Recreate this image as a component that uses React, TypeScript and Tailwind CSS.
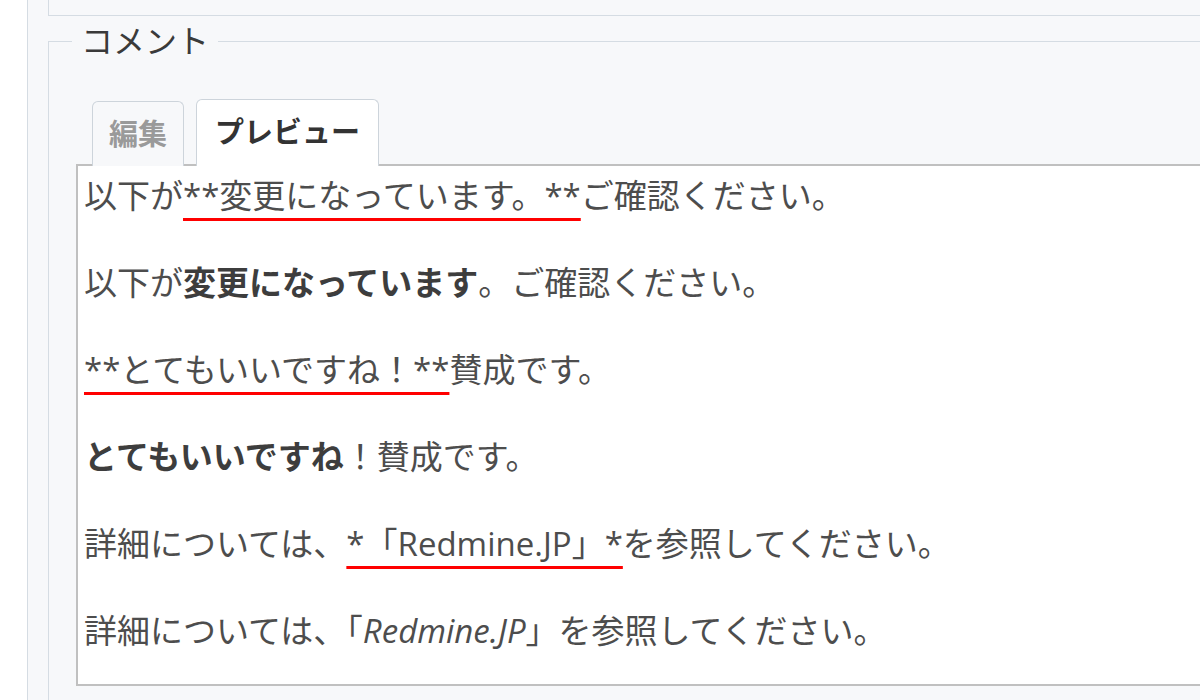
const font = { fontFamily: '"Open Sans", "Noto Sans CJK JP", sans-serif' };

const mark =
  "underline decoration-[#ff0000] decoration-[3px] underline-offset-[10px] [text-decoration-skip-ink:none]";

const CommentPreview = () => {
  return (
    <div className="h-[700px] w-full overflow-hidden bg-white flex" style={font}>
      <div className="w-[27px] shrink-0 bg-white" />
      <div className="w-[1300px] shrink-0 border-l border-[#d5dce3] bg-[#f7f8fa] pl-[20px]">
        <div className="h-[16px] border-l border-b border-[#d5dce3]" />
        <fieldset className="mt-[5px] h-[800px] border border-[#d5dce3] pl-[27px] pr-0">
          <legend className="ml-[-4px] px-[9px] text-[32px] leading-[40px] text-[#3a3a3a]">
            コメント
          </legend>
          <div className="mt-[38px] flex items-end pl-[16px] gap-[12px] relative z-10 mb-[-2px]">
            <div className="h-[65px] px-[16px] flex items-center rounded-t-[6px] border border-b-0 border-[#cdd4db] bg-[#f7f8fa] text-[29px] font-bold text-[#9a9a9a]">
              編集
            </div>
            <div className="h-[67px] px-[18px] pb-[2px] flex items-center rounded-t-[6px] border border-b-0 border-[#cdd4db] bg-white text-[29px] font-bold text-[#333]">
              プレビュー
            </div>
          </div>
          <div className="border-2 border-[#c0c0c0] bg-white pl-[6px] pt-[6px] pb-[29px] text-[33px] leading-[48px] text-[#4d4d4d]">
            <p className="mb-[39px]">
              以下が<span className={mark}>**変更になっています。**</span>ご確認ください。
            </p>
            <p className="mb-[39px]">
              以下が<strong className="font-bold text-[#3d3d3d]">変更になっています</strong>。ご確認ください。
            </p>
            <p className="mb-[39px]">
              <span className={mark}>**とてもいいですね！**</span>賛成です。
            </p>
            <p className="mb-[39px]">
              <strong className="font-bold text-[#3d3d3d]">とてもいいですね</strong>！賛成です。
            </p>
            <p className="mb-[39px]">
              詳細については、<span className={mark}>*「Redmine.JP」*</span>を参照してください。
            </p>
            <p>
              詳細については、「<em className="italic">Redmine.JP</em>」を参照してください。
            </p>
          </div>
        </fieldset>
      </div>
    </div>
  );
};

export default function App() {
  return <CommentPreview />;
}
